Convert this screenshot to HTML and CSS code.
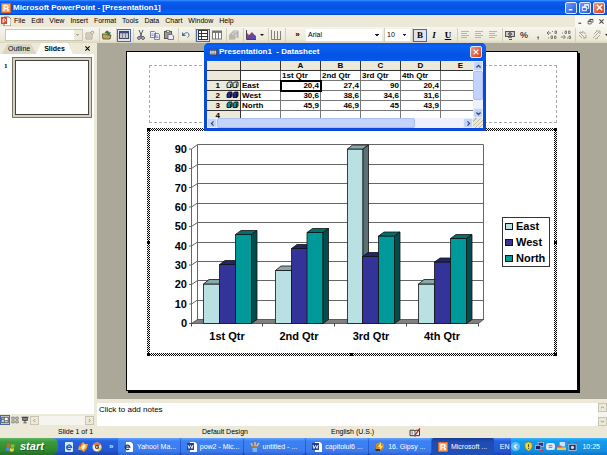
FILE: index.html
```html
<!DOCTYPE html>
<html lang="en">
<head>
<meta charset="utf-8">
<title>Microsoft PowerPoint - [Presentation1]</title>
<link rel="stylesheet" href="styles.css">
</head>
<body>
<svg class="defs" aria-hidden="true">
  <symbol id="ppt" viewBox="0 0 10 10"><rect width="10" height="10" rx="1" fill="#e2662a"/><rect x="1" y="1" width="8" height="8" fill="#f6a45c"/><path d="M3 8V2.500h2.500a1.500 1.500 0 0 1 0 3H3M6 7h2" fill="none" stroke="#fff" stroke-width="1.300"/></symbol>
  <symbol id="doc" viewBox="0 0 10 10"><path d="M3 1h5l2 2v7H3z" fill="#fff" stroke="#555" stroke-width=".7"/><rect y="1" width="6" height="7" fill="#d8442c"/><path d="M2 7V3h1.500a1 1 0 0 1 0 2.300H2" fill="none" stroke="#fff" stroke-width=".9"/></symbol>
  <symbol id="props" viewBox="0 0 10 10"><path d="M1 3h6v6H1zM2 5h4M2 7h4M5 3l2-2 2 1-2 3" fill="none" stroke="#aca899" stroke-width="1"/></symbol>
  <symbol id="import" viewBox="0 0 10 10"><path d="M0 4h4l1 1h4l-1 4H1z" fill="#b8a850" stroke="#4a4a28" stroke-width=".8"/><path d="M3 3c1-3 4-2 4 0l1.500-.5L7 5 4.500 3.500 6 3" fill="#3b7a3b" stroke="#234" stroke-width=".4"/></symbol>
  <symbol id="sheet" viewBox="0 0 10 10"><rect x=".5" y="1.500" width="9" height="7" fill="#fff" stroke="#444"/><path d="M0 2.500h10" stroke="#334a80" stroke-width="2"/><path d="M.5 5h9M.5 7h9M3.500 2v7M6.500 2v7" stroke="#667" stroke-width=".7"/></symbol>
  <symbol id="cut" viewBox="0 0 10 10"><path d="M3 0l3 7M7 0L4 7" stroke="#556" fill="none"/><circle cx="3" cy="8" r="1.400" fill="none" stroke="#446"/><circle cx="7" cy="8" r="1.400" fill="none" stroke="#446"/></symbol>
  <symbol id="copy" viewBox="0 0 10 10"><path d="M.5 1.500h4l1 1v5h-5zM4.500 3.500h4l1 1v5h-5z" fill="#eef" stroke="#66698c" stroke-width=".8"/><path d="M1.500 4h2M1.500 5.500h2M5.500 6h3M5.500 7.500h3" stroke="#66698c" stroke-width=".6"/></symbol>
  <symbol id="paste" viewBox="0 0 10 10"><rect x=".5" y="1.500" width="7" height="7" fill="#a29a80" stroke="#555"/><rect x="2.500" y=".5" width="3" height="2" fill="#ddd" stroke="#555" stroke-width=".6"/><path d="M4 4.500h4l1.500 1.500v3.500H4z" fill="#eef" stroke="#558" stroke-width=".8"/></symbol>
  <symbol id="undo" viewBox="0 0 10 10"><path d="M2 5c2-3 6-3 6 0 0 1-.5 2-1.500 2.500" fill="none" stroke="#556aa0"/><path d="M1 2v4h4z" fill="#556aa0"/></symbol>
  <symbol id="rows" viewBox="0 0 10 10"><rect x=".5" y=".5" width="9" height="9" fill="#fff" stroke="#333"/><path d="M.5 3.500h9M.5 6.500h9M3.500 .5v9" stroke="#333"/></symbol>
  <symbol id="cols" viewBox="0 0 10 10"><rect x=".5" y="1" width="9" height="8" fill="#fff" stroke="#777"/><path d="M1 2h8" stroke="#555" stroke-width="1.500"/><path d="M3.500 1v8M6.500 1v8" stroke="#777"/></symbol>
  <symbol id="table3" viewBox="0 0 10 10"><path d="M0 5h6v4H0zM2 5V3h7v5M4 3V1h5v2M2 5v4M4 5v4M6 5V3M8 8V2M0 7h6" fill="none" stroke="#999" stroke-width=".8"/></symbol>
  <symbol id="area" viewBox="0 0 10 10"><path d="M0 9V2l3 3 3-3 3 4v3z" fill="#a34450"/><path d="M0 9V6l3 1 3-4 4 3v3z" fill="#5c48b4"/><path d="M.5 0v9.500H10" fill="none" stroke="#445"/></symbol>
  <symbol id="vgrid" viewBox="0 0 10 10"><path d="M.5 0v9.500h9.500M3.500 1v8M6.500 1v8M9.500 1v8" fill="none" stroke="#666" stroke-width=".8"/></symbol>
  <symbol id="lines" viewBox="0 0 10 10"><path d="M1 1.500h8M1 3.500h6M1 5.500h8M1 7.500h6" stroke="#b9b6a8"/></symbol>
  <symbol id="money" viewBox="0 0 10 10"><rect x=".5" y="1.500" width="9" height="5" fill="#ccc" stroke="#555"/><circle cx="5" cy="4" r="1.300" fill="none" stroke="#333"/><path d="M3 8c1-1 3-1 4 0M4 9.500h3" stroke="#555" fill="none"/></symbol>
  <symbol id="decup" viewBox="0 0 10 10"><path d="M0 3h4M2 1L0 3l2 2M5 1.500h1M8 1h1.500v2.500H8zM1 8h1M4 6h1.500v2.500H4zM7.500 6H9v2.500H7.500z" fill="none" stroke="#666" stroke-width=".8"/></symbol>
  <symbol id="decdn" viewBox="0 0 10 10"><path d="M1 3h1M4 1h1.500v2.500H4zM7.500 1H9v2.500H7.500zM0 7h4M2.500 5l2 2-2 2M6 8h1M8 6h1.500v2.500H8z" fill="none" stroke="#666" stroke-width=".8"/></symbol>
  <symbol id="angle" viewBox="0 0 10 10"><path d="M1 2l6 6M8 5v3H5M1 5l3 3M4 1l4 3M2 2l3 1" fill="none" stroke="#aca899"/></symbol>
  <symbol id="angleup" viewBox="0 0 10 10"><path d="M1 8l6-6M4 1h4v3M2 4l3-3M5 8l3-3M3 9l3-1" fill="none" stroke="#aca899"/></symbol>
  <symbol id="min" viewBox="0 0 10 10"><path d="M2 7.500h4" stroke="currentColor" stroke-width="1.600"/></symbol>
  <symbol id="restore" viewBox="0 0 10 10"><path d="M4 4V2h4.500v4H7M1.500 4.500H6v4H1.500z" fill="none" stroke="currentColor" stroke-width="1"/><path d="M1.500 4.500H6M4 2h4.500" stroke="currentColor" stroke-width="1.500"/></symbol>
  <symbol id="close" viewBox="0 0 10 10"><path d="M2 2l6 6M8 2L2 8" stroke="currentColor" stroke-width="1.500"/></symbol>
  <symbol id="left" viewBox="0 0 10 10"><path d="M6.500 2l-3 3 3 3" fill="none" stroke="currentColor" stroke-width="1.800"/></symbol>
  <symbol id="right" viewBox="0 0 10 10"><path d="M3.500 2l3 3-3 3" fill="none" stroke="currentColor" stroke-width="1.800"/></symbol>
  <symbol id="up" viewBox="0 0 10 10"><path d="M2 6.500l3-3 3 3" fill="none" stroke="currentColor" stroke-width="1.800"/></symbol>
  <symbol id="down" viewBox="0 0 10 10"><path d="M2 3.500l3 3 3-3" fill="none" stroke="currentColor" stroke-width="1.800"/></symbol>
  <symbol id="bars" viewBox="0 0 13 7"><path d="M1 3l1.500-2H6v4L5 6.500H1zM7 2.500L8.500 1H12v4l-1 1.500H7z" fill="currentColor" stroke="#000" stroke-width=".8"/><path d="M4.500 3v3.500M10.500 2.500v4" fill="none" stroke="#000" stroke-width=".7"/></symbol>
  <symbol id="normal" viewBox="0 0 10 10"><rect x="1" y="1.500" width="8" height="7" fill="#fff" stroke="#333"/><path d="M4 1.500v7M4 6h5M1 4h3" stroke="#333"/></symbol>
  <symbol id="sorter" viewBox="0 0 10 10"><path d="M1 1.500h3v2.500H1zM6 1.500h3v2.500H6zM1 6h3v2.500H1zM6 6h3v2.500H6z" fill="#fff" stroke="#444" stroke-width=".8"/></symbol>
  <symbol id="show" viewBox="0 0 10 10"><path d="M.5 1.500h9M2 2h6v3.500H2zM5 5v3M3 8.500h4" fill="#889" stroke="#333"/></symbol>
  <symbol id="flag" viewBox="0 0 10 10"><path d="M1 2q2-1.500 3.500-.3L4 5Q2.500 4 .5 5z" fill="#f0562a"/><path d="M5 2q2 1 4 0L8.300 5.200q-2 1-3.800 0z" fill="#7cc142"/><path d="M.5 5.600q2-1.200 3.300-.2L3.200 9Q1.500 8 0 9z" fill="#4a8df0"/><path d="M4.300 5.900q2 1 3.900 0L7.500 9.300q-2 .8-3.900-.2z" fill="#fbd034"/></symbol>
  <symbol id="ie" viewBox="0 0 10 10"><rect x="1" width="8" height="10" rx="1" fill="#dcecff"/><path d="M3 5.300h4.500a2.400 2.400 0 1 0-.7 1.800" fill="none" stroke="#1d62c8" stroke-width="1.400"/></symbol>
  <symbol id="media" viewBox="0 0 10 10"><path d="M5 0l2 2 3 0-1 4-3 4-3-2-3 0 1-4z" fill="#f0a030"/><path d="M3 5l3-3 2 2-3 4z" fill="#fff4c8"/><path d="M1 3l2-2 1 1-2 3z" fill="#d0481c"/></symbol>
  <symbol id="player" viewBox="0 0 10 10"><circle cx="5" cy="5" r="4.500" fill="#f0ece0"/><path d="M1 3A4.500 4.500 0 0 1 9 3L6 4z" fill="#e9732a"/><path d="M6 6l3.500-1A4.500 4.500 0 0 1 6 9.500z" fill="#f5c838"/><circle cx="5" cy="5" r="2" fill="#334"/><path d="M4.300 3.800l2 1.200-2 1.200z" fill="#fff"/></symbol>
  <symbol id="page" viewBox="0 0 10 10"><path d="M2 0h5l2 2v8H2z" fill="#fff"/><path d="M1 5.200h4.800a2.300 2.300 0 1 0-.7 1.800" fill="none" stroke="#17386e" stroke-width="1.300"/></symbol>
  <symbol id="word" viewBox="0 0 10 10"><path d="M3 0h5l2 2v8H3z" fill="#fff"/><rect y="1" width="7" height="7" fill="#28408f"/><path d="M1 3l1 3.500L3.500 3.500 5 6.500 6 3" fill="none" stroke="#fff" stroke-width=".9"/></symbol>
  <symbol id="paint" viewBox="0 0 10 10"><path d="M2 5h5v5H3z" fill="#7fb4e8"/><path d="M3 5L1 1M5 5V0M6 5l3-4" stroke="#e8c060" stroke-width="1.500"/><path d="M2 5h5" stroke="#943"/></symbol>
  <symbol id="amp" viewBox="0 0 10 10"><path d="M1 2l4-2 4 2v4L5 9 1 7z" fill="#d08a28"/><path d="M6 0L3 5h2L3 10l5-6H6z" fill="#ffe070"/><path d="M0 7h5v2H1z" fill="#333"/></symbol>
  <symbol id="shield" viewBox="0 0 10 10"><path d="M5 0l4 1.500v3.500q0 3-4 5-4-2-4-5V1.500z" fill="#f7d62c" stroke="#8a6b00" stroke-width=".6"/><path d="M5 2.500v3M5 6.500v1.200" stroke="#333"/></symbol>
  <symbol id="net" viewBox="0 0 10 10"><rect x="3.500" y=".5" width="6" height="4.500" fill="#223a8c" stroke="#aac"/><rect x=".5" y="4" width="6" height="4.500" fill="#10246a" stroke="#aac"/><path d="M5 9.500h4" stroke="#d33"/></symbol>
  <symbol id="disc" viewBox="0 0 10 10"><rect y="1" width="10" height="8" rx="3" fill="#e4e8f4"/><path d="M3 4h4M3 6h4" stroke="#8a5ac0"/></symbol>
  <symbol id="stack" viewBox="0 0 10 10"><rect x="3" y="0" width="6" height="5" fill="#cfe0f8"/><path d="M0 6h10v3H0z" fill="#f2c84c"/><path d="M1 4h4v2H1z" fill="#e05a3a"/></symbol>
  <symbol id="cam" viewBox="0 0 10 10"><path d="M0 1l3 1M10 1L7 2" stroke="#d33" stroke-width="1.500"/><rect x="1" y="2.500" width="8" height="7" fill="#22305c" stroke="#dde" stroke-width=".8"/><circle cx="5" cy="6" r="1.800" fill="#cde"/></symbol>
  <symbol id="spell" viewBox="0 0 12 10"><path d="M.5 2.500h4.500l1 1 1-1h4v6H7l-1 .8-1-.8H.5z" fill="#fff" stroke="#222"/><path d="M6 3v6M2 4.500h2M2 6.500h2" stroke="#222" stroke-width=".8"/><path d="M6 8l5.500-7.500" stroke="#a22" stroke-width="1.500"/></symbol>
</svg>

<header class="titlebar">
  <svg class="ico"><use href="#ppt"/></svg>
  <h1>Microsoft PowerPoint - [Presentation1]</h1>
  <div class="winbtns">
    <button class="win" aria-label="Minimize"><svg class="ico"><use href="#min"/></svg></button>
    <button class="win" aria-label="Restore"><svg class="ico"><use href="#restore"/></svg></button>
    <button class="win red" aria-label="Close"><svg class="ico"><use href="#close"/></svg></button>
  </div>
</header>

<nav class="menubar">
  <svg class="ico"><use href="#doc"/></svg>
  <button>File</button><button>Edit</button><button>View</button><button>Insert</button><button>Format</button><button>Tools</button><button>Data</button><button>Chart</button><button>Window</button><button>Help</button>
  <div class="mdi">
    <button aria-label="Minimize document"><svg class="ico sm"><use href="#min"/></svg></button>
    <button aria-label="Restore document"><svg class="ico sm"><use href="#restore"/></svg></button>
    <button aria-label="Close document"><svg class="ico sm"><use href="#close"/></svg></button>
  </div>
</nav>

<div class="toolbar">
  <div class="group"><select class="objects" aria-label="Chart objects" disabled><option></option></select><button aria-label="Format"><svg class="ico"><use href="#props"/></svg></button></div>
  <div class="group"><button aria-label="Import file"><svg class="ico"><use href="#import"/></svg></button></div>
  <div class="group"><button class="on" aria-label="View datasheet"><svg class="ico"><use href="#sheet"/></svg></button></div>
  <div class="group"><button aria-label="Cut"><svg class="ico"><use href="#cut"/></svg></button><button aria-label="Copy"><svg class="ico"><use href="#copy"/></svg></button><button aria-label="Paste"><svg class="ico"><use href="#paste"/></svg></button></div>
  <div class="group"><button aria-label="Undo"><svg class="ico"><use href="#undo"/></svg></button></div>
  <div class="group"><button class="on" aria-label="By row"><svg class="ico"><use href="#rows"/></svg></button><button aria-label="By column"><svg class="ico"><use href="#cols"/></svg></button></div>
  <div class="group"><button aria-label="Data table"><svg class="ico"><use href="#table3"/></svg></button></div>
  <div class="group"><button aria-label="Chart type"><svg class="ico"><use href="#area"/></svg></button><button class="drop" aria-label="Chart type list"></button></div>
  <div class="group"><button aria-label="Category gridlines"><svg class="ico"><use href="#vgrid"/></svg></button></div>
  <button class="more" aria-label="More buttons">»</button>
  <div class="group"><select class="font" aria-label="Font"><option>Arial</option></select></div>
  <div class="group"><select class="size" aria-label="Font size"><option>10</option></select></div>
  <div class="group"><button class="on serif" aria-label="Bold">B</button><button class="serif it" aria-label="Italic">I</button><button class="serif un" aria-label="Underline">U</button></div>
  <div class="group"><button aria-label="Align left"><svg class="ico"><use href="#lines"/></svg></button><button aria-label="Center"><svg class="ico"><use href="#lines"/></svg></button><button aria-label="Align right"><svg class="ico"><use href="#lines"/></svg></button></div>
  <div class="group"><button aria-label="Currency style"><svg class="ico"><use href="#money"/></svg></button><button class="sym">%</button><button class="sym">,</button><button aria-label="Increase decimal"><svg class="ico"><use href="#decup"/></svg></button><button aria-label="Decrease decimal"><svg class="ico"><use href="#decdn"/></svg></button></div>
  <div class="group last"><button aria-label="Angle clockwise"><svg class="ico"><use href="#angle"/></svg></button><button aria-label="Angle counterclockwise"><svg class="ico"><use href="#angleup"/></svg></button></div>
  <button class="drop" aria-label="Toolbar options"></button>
</div>

<main class="work">
  <aside class="pane">
    <div class="tabs"><button class="tab">Outline</button><button class="tab current">Slides</button><button class="x" aria-label="Close pane"><svg class="ico sm"><use href="#close"/></svg></button></div>
    <div class="thumbs"><span>1</span><div class="thumb"></div></div>
    <div class="views">
      <button class="on" aria-label="Normal view"><svg class="ico"><use href="#normal"/></svg></button><button aria-label="Slide sorter"><svg class="ico"><use href="#sorter"/></svg></button><button aria-label="Slide show"><svg class="ico"><use href="#show"/></svg></button>
      <div class="hbar"><button class="arrow" aria-label="Scroll left"><svg class="ico sm"><use href="#left"/></svg></button><button class="arrow" aria-label="Scroll right"><svg class="ico sm"><use href="#right"/></svg></button></div>
    </div>
  </aside>

  <section class="editor">
    <div class="stage">
      <div class="slide">
        <div class="placeholder"></div>
        <svg class="chart" viewBox="147 128 410 228" role="img" aria-label="Quarterly chart">
          <defs>
            <pattern id="hatch" width="2" height="2" patternUnits="userSpaceOnUse"><rect width="2" height="2" fill="#fff"/><path d="M0 0h1v1H0zM1 1h1v1H1z" fill="#000"/></pattern>
          </defs>
          <path d="M147 128h410v228H147zM150 131v222h404V131z" fill="url(#hatch)" fill-rule="evenodd" shape-rendering="crispEdges"/>
          <path d="M147 128h3v3h-3zM554 128h3v3h-3zM147 353h3v3h-3zM554 353h3v3h-3zM147 241h3v3h-3zM554 241h3v3h-3zM350 353h3v3h-3z"/>
          <g fill="none" stroke="#666">
            <path d="M191.500 324V149l6-4.500h286V320M197.500 144.500V320M197.500 164.500h286M197.500 183.500h286M197.500 203.500h286M197.500 222.500h286M197.500 242.500h286M197.500 261.500h286M197.500 280.500h286M197.500 300.500h286"/>
            <path d="M189 149h2.500M189 168.500h2.500l6-4M189 187.500h2.500l6-4M189 207h2.500l6-4M189 226.500h2.500l6-4M189 246h2.500l6-4M189 265h2.500l6-4M189 284.500h2.500l6-4M189 304h2.500l6-4M189 323.500h2.500"/>
          </g>
          <path d="M191.500 323.500l6-4h286l-5 4z" fill="#808080" stroke="#444" stroke-width=".8"/>
          <path d="M191.500 323.500v3M262.500 323.500v3M334.500 323.500v3M406.500 323.500v3M478.500 323.500v3" stroke="#444"/>
          <g stroke="#111" stroke-width=".8" stroke-linejoin="round">
            <g fill="#b9e0e3">
              <path d="M203.500 284h16v39.500h-16zM275.500 270.500h16v53h-16zM347.500 149h15.500v174.500h-15.500zM418.500 284h16v39.500h-16z"/>
            </g>
            <g fill="#87a9ab"><path d="M203.500 284l5.500-4.500h16l-5.500 4.500zM275.500 270.500l5.500-4.500h16l-5.500 4.500zM347.500 149l5-4h16l-5.500 4zM418.500 284l5.500-4.500h16l-5.500 4.500z"/></g>
            <path d="M363 149l5.500-4v175l-5.500 3.500z" fill="#5c7173"/>
            <g fill="#333399">
              <path d="M219.500 264.500h16v59h-16zM291.500 248.500h16v75h-16zM362.500 256.500h16v67h-16zM434.500 262h16v61.500h-16z"/>
            </g>
            <g fill="#242466"><path d="M219.500 264.500l5.500-4h16l-5.500 4zM291.500 248.500l5.500-4h16l-5.500 4zM362.500 256.500l5.500-4h16l-5.500 4zM434.500 262l5.500-4h16l-5.500 4z"/></g>
            <g fill="#009999">
              <path d="M235.500 234.500h16v89h-16zM307 232.500h16v91h-16zM378.500 236h16v87.500h-16zM450.500 238.500h16v85h-16z"/>
            </g>
            <g fill="#00706e"><path d="M235.500 234.500l5.500-4h16l-5.500 4zM307 232.500l5.500-4h16l-5.500 4zM378.500 236l5.500-4h16l-5.500 4zM450.500 238.500l5.500-4h16l-5.500 4z"/></g>
            <g fill="#004d4d"><path d="M251.500 234.500l5.500-4v89l-5.500 4zM323 232.500l5.500-4v91l-5.500 4zM394.500 236l5.500-4v87.500l-5.500 4zM466.500 238.500l5.500-4v85l-5.500 4z"/></g>
          </g>
          <g class="lbl" text-anchor="end">
            <text x="187" y="153">90</text><text x="187" y="172">80</text><text x="187" y="192">70</text><text x="187" y="211">60</text><text x="187" y="230">50</text><text x="187" y="250">40</text><text x="187" y="269">30</text><text x="187" y="288">20</text><text x="187" y="308">10</text><text x="187" y="327">0</text>
          </g>
          <g class="lbl" text-anchor="middle">
            <text x="227" y="340">1st Qtr</text><text x="299" y="340">2nd Qtr</text><text x="371" y="340">3rd Qtr</text><text x="442" y="340">4th Qtr</text>
          </g>
          <rect x="502.500" y="217.500" width="47" height="49" fill="#fff" stroke="#333"/>
          <g stroke="#111"><rect x="505.500" y="223.500" width="7" height="6" fill="#b9e0e3"/><rect x="505.500" y="239.500" width="7" height="6" fill="#333399"/><rect x="505.500" y="255.500" width="7" height="6" fill="#009999"/></g>
          <g class="lbl"><text x="516" y="230">East</text><text x="516" y="246">West</text><text x="516" y="262">North</text></g>
        </svg>
      </div>
    </div>
    <div class="notes">
      <textarea aria-label="Notes">Click to add notes</textarea>
      <div class="vbar"><button class="arrow" aria-label="Scroll up"><svg class="ico sm"><use href="#up"/></svg></button><button class="arrow" aria-label="Scroll down"><svg class="ico sm"><use href="#down"/></svg></button></div>
    </div>
  </section>
</main>

<section class="datasheet" aria-label="Datasheet">
  <header><svg class="ico"><use href="#sheet"/></svg><h2>Presentation1 &nbsp;- Datasheet</h2><button class="win red" aria-label="Close datasheet"><svg class="ico"><use href="#close"/></svg></button></header>
  <div class="sheet">
    <div class="grid">
      <table>
        <colgroup><col class="c0"><col class="c1"><col class="c2"><col class="c2"><col class="c2"><col class="c2"><col class="c2"></colgroup>
        <thead><tr><th></th><th></th><th>A</th><th>B</th><th>C</th><th>D</th><th>E</th></tr></thead>
        <tbody>
          <tr><th></th><td></td><td class="t">1st Qtr</td><td class="t">2nd Qtr</td><td class="t">3rd Qtr</td><td class="t">4th Qtr</td><td></td></tr>
          <tr><th class="r">1<svg class="east"><use href="#bars"/></svg></th><td class="t">East</td><td class="sel">20,4</td><td>27,4</td><td>90</td><td>20,4</td><td></td></tr>
          <tr><th class="r">2<svg class="west"><use href="#bars"/></svg></th><td class="t">West</td><td>30,6</td><td>38,6</td><td>34,6</td><td>31,6</td><td></td></tr>
          <tr><th class="r">3<svg class="north"><use href="#bars"/></svg></th><td class="t">North</td><td>45,9</td><td>46,9</td><td>45</td><td>43,9</td><td></td></tr>
          <tr><th class="r">4<svg></svg></th><td></td><td></td><td></td><td></td><td></td><td></td></tr>
        </tbody>
      </table>
    </div>
    <div class="xpv"><button class="xp" aria-label="Scroll up"><svg class="ico sm"><use href="#up"/></svg></button><div class="grip"></div><button class="xp" aria-label="Scroll down"><svg class="ico sm"><use href="#down"/></svg></button></div>
  </div>
  <div class="xph"><button class="xp" aria-label="Scroll left"><svg class="ico sm"><use href="#left"/></svg></button><div class="grip"></div><button class="xp" aria-label="Scroll right"><svg class="ico sm"><use href="#right"/></svg></button><div class="corner"></div></div>
</section>

<footer class="status"><span>Slide 1 of 1</span><span>Default Design</span><span>English (U.S.)</span><svg class="book"><use href="#spell"/></svg></footer>

<div class="taskbar">
  <button class="start"><svg class="ico"><use href="#flag"/></svg>start</button>
  <div class="quick"><button aria-label="Internet Explorer"><svg class="ico"><use href="#ie"/></svg></button><button aria-label="Media"><svg class="ico"><use href="#media"/></svg></button><button aria-label="Player"><svg class="ico"><use href="#player"/></svg></button><button class="chev" aria-label="More">»</button></div>
  <div class="tasks">
    <button><svg class="ico"><use href="#page"/></svg>Yahoo! Ma...</button>
    <button><svg class="ico"><use href="#word"/></svg>pow2 - Mic...</button>
    <button><svg class="ico"><use href="#paint"/></svg>untitled - ...</button>
    <button><svg class="ico"><use href="#word"/></svg>capitolul6 ...</button>
    <button><svg class="ico"><use href="#amp"/></svg>16. Gipsy ...</button>
    <button class="active"><svg class="ico"><use href="#ppt"/></svg>Microsoft ...</button>
  </div>
  <span class="lang">EN</span>
  <div class="tray"><button class="expand" aria-label="Show hidden icons"><svg class="ico sm"><use href="#left"/></svg></button><svg class="ico"><use href="#shield"/></svg><svg class="ico"><use href="#net"/></svg><svg class="ico"><use href="#disc"/></svg><svg class="ico"><use href="#stack"/></svg><svg class="ico"><use href="#cam"/></svg><span>10:25</span></div>
</div>
</body>
</html>
```
FILE: styles.css
```css
* { box-sizing: border-box; }
body {
  margin: 0;
  height: 100vh;
  display: flex;
  flex-direction: column;
  position: relative;
  overflow: hidden;
  background: #ece9d8;
  font: 7px/10px "Liberation Sans", Arial, sans-serif;
  color: #000;
}
button, select, textarea { font: inherit; color: inherit; margin: 0; padding: 0; border: 0; background: none; border-radius: 0; }
h1, h2 { margin: 0; font-size: 8px; line-height: 12px; font-weight: bold; color: #fff; white-space: nowrap; }
svg { display: block; flex: none; }
.defs { position: absolute; width: 0; height: 0; }
.ico { width: 10px; height: 10px; }
.sm { width: 7px; height: 7px; }

.titlebar {
  flex: none;
  height: 15px;
  display: flex;
  align-items: center;
  gap: 2px;
  padding: 0 2px 0 1px;
  background: linear-gradient(#3a8cff 0, #0a5cf0 2px, #0552e2 8px, #0464fa 13px, #0340bc 15px);
}
.winbtns { margin-left: auto; display: flex; gap: 2px; }
.win {
  width: 12px;
  height: 12px;
  display: grid;
  place-items: center;
  border: 1px solid #dfe9ff;
  border-radius: 2px;
  background: linear-gradient(135deg, #6f9cf8, #2258d8);
  color: #fff;
}
.win .ico { width: 9px; height: 9px; }
.red { background: linear-gradient(135deg, #f09a7c, #d63c14); }

.menubar { flex: none; height: 12px; display: flex; align-items: center; padding-left: 1px; }
.menubar > button { padding: 0 3px; }
.mdi { margin-left: auto; height: 12px; width: 32px; display: flex; align-items: center; justify-content: space-around; background: #f8f7f1; color: #444; }

.toolbar {
  flex: none;
  height: 16px;
  display: flex;
  align-items: center;
  padding-left: 5px;
  background: linear-gradient(#f7f6ee, #ece9d8 80%, #d8d4c0);
}
.group { display: flex; align-items: center; padding-right: 2px; border-right: 1px solid #d3cfbc; height: 14px; }
.last { border-right: 0; padding-right: 0; }
.toolbar button { width: 14px; height: 13px; display: grid; place-items: center; flex: none; }
.toolbar .on, .views .on { border: 1px solid #4a68a8; background: #dfe4f0; }
.toolbar select {
  appearance: none;
  height: 12px;
  padding: 0 2px;
  font-size: 7px;
  background: linear-gradient(45deg, transparent 50%, #222 50%) right 5px center / 2px 2px no-repeat, linear-gradient(-45deg, transparent 50%, #222 50%) right 3px center / 2px 2px no-repeat, #fff;
}
.toolbar .objects { width: 78px; border: 1px solid #cbc7b4; background: linear-gradient(45deg, transparent 50%, #aca899 50%) right 4px center / 2px 2px no-repeat, linear-gradient(-45deg, transparent 50%, #aca899 50%) right 2px center / 2px 2px no-repeat, linear-gradient(90deg, #fff 68px, #ece9d8 68px); opacity: 1; }
.toolbar .font { width: 76px; }
.toolbar .size { width: 25px; }
.toolbar .drop { width: 8px; }
.drop::after { content: ""; border: 2px solid transparent; border-top-color: #111; border-bottom: 0; }
.toolbar .more { width: 15px; margin: 0 1px 0 4px; font-size: 8px; font-weight: bold; }
.toolbar .serif { font: bold 9px/9px "Liberation Serif", serif; }
.toolbar .it { font-style: italic; }
.un { text-decoration: underline; }
.toolbar .sym { font-size: 9px; font-weight: bold; color: #444; }
.toolbar > .drop { width: 6px; }

.work { flex: 1; min-height: 0; display: flex; }
.pane { width: 97px; flex: none; display: flex; flex-direction: column; padding-right: 3px; }
.tabs { display: flex; height: 11px; align-items: flex-end; padding-left: 2px; }
.tab { height: 10px; padding: 0 6px; background: #dad6c3; clip-path: polygon(5px 0, calc(100% - 5px) 0, 100% 100%, 0 100%); }
.tab.current { height: 11px; padding: 0 8px; background: #fff; font-weight: bold; }
.x { margin: 0 3px 2px auto; }
.thumbs { flex: 1; display: flex; gap: 4px; padding: 3px 2px 0 4px; background: #fff; font: bold 7px/18px "Liberation Serif", serif; }
.thumb { flex: 1; height: 61px; border: 1px solid #77746a; background: #fff; outline: 1px solid #44423a; outline-offset: -4px; box-shadow: inset 0 0 0 2px #d5d2c3; }
.views { display: flex; align-items: center; height: 12px; }
.views > button { width: 10px; height: 10px; display: grid; place-items: center; }
.views .ico { width: 8px; height: 8px; }
.hbar { flex: 1; display: flex; justify-content: space-between; background: #f5f4ee; }
.arrow { width: 9px; height: 9px; display: grid; place-items: center; border: 1px solid #c8c5b4; background: #ece9d8; color: #8f8c7c; }
.arrow .sm { width: 5px; height: 5px; }

.editor { flex: 1; min-width: 0; display: flex; flex-direction: column; }
.stage { flex: 1; min-height: 0; padding: 8px 29px 8px; background: #aca899; }
.slide { height: 100%; padding: 13px 20px 0 20px; background: #fff; border: 1px solid #000; box-shadow: 2px 2px 0 #000; }
.placeholder { height: 58px; margin: 0 0 5px 2px; border: 1px dashed #aaa; }
.chart { width: 100%; height: auto; }
.lbl { font: bold 11px "Liberation Sans", Arial, sans-serif; }
.notes { flex: none; height: 27px; display: flex; padding-top: 4px; }
.notes textarea { flex: 1; resize: none; padding: 1px 2px; background: #fff; font-size: 8px; line-height: 11px; overflow: hidden; }
.vbar { width: 9px; display: flex; flex-direction: column; justify-content: space-between; background: #f5f4ee; }

.datasheet {
  position: absolute;
  left: 204px;
  top: 43px;
  width: 282px;
  padding: 0 3px 3px;
  background: #0a48d8;
  border-radius: 5px 5px 0 0;
}
.datasheet header { height: 18px; display: flex; align-items: center; gap: 2px; margin: 0 -3px; padding: 0 4px 0 5px; border-radius: 5px 5px 0 0; background: linear-gradient(#0a50e0, #0a62f4 3px, #0553e2 12px, #0458ec); }
.datasheet .ico { width: 8px; height: 8px; }
.datasheet .sm { width: 7px; height: 7px; }
.datasheet header button { margin-left: auto; }
.sheet { display: flex; height: 57px; background: #fff; }
.grid { flex: 1; min-width: 0; overflow: hidden; }
table { border-collapse: separate; border-spacing: 0; table-layout: fixed; width: 274px; font-size: 8px; line-height: 9px; font-weight: bold; }
.c0 { width: 34px; }
.c1, .c2 { width: 40px; }
th, td { height: 10px; padding: 0 1px; border-right: 1px solid #777; border-bottom: 1px solid #777; text-align: right; white-space: nowrap; }
th { background: #ece9d8; text-align: center; border-color: #333; }
.t { text-align: left; }
.r { text-align: right; }
.r svg { display: inline-block; width: 13px; height: 7px; margin-left: 6px; }
.sel { outline: 2px solid #000; outline-offset: -1px; }
.east { color: #c8dedc; }
.west { color: #26269a; }
.north { color: #0a9090; }
.xpv { width: 10px; display: flex; flex-direction: column; background: #eef1fc; }
.xph { height: 10px; display: flex; background: #eef1fc; }
.xp { width: 10px; height: 10px; flex: none; display: grid; place-items: center; border: 1px solid #e4ecff; border-radius: 2px; background: #c3d3fb; color: #33507c; }
.grip { background: #c3d3fb; border: 1px solid #aabff2; border-radius: 2px; }
.xpv .grip { height: 29px; margin-bottom: auto; }
.xph .grip { width: 198px; margin-right: auto; }
.corner { width: 10px; background: repeating-linear-gradient(135deg, #ece9d8 0 2px, #c0bba6 2px 3px); }

.status { flex: none; height: 12px; display: grid; grid-template-columns: 144px 129px 78px 1fr; align-items: center; padding-left: 58px; }
.book { width: 12px; height: 9px; }

.taskbar { flex: none; height: 17px; display: flex; align-items: stretch; color: #fff; background: linear-gradient(#4a8cf4, #2560de 3px, #2358d2 13px, #1b44a8); }
.start { width: 58px; display: flex; align-items: center; gap: 4px; padding-left: 6px; border-radius: 0 6px 6px 0; background: linear-gradient(#5fb45f, #3a9a3a 4px, #2f8a30 12px, #256f26); font: italic bold 11px/15px "Liberation Sans", Arial, sans-serif; text-shadow: 1px 1px 0 #1d5a1e; }
.quick { display: flex; align-items: center; gap: 4px; width: 60px; padding-left: 6px; }
.chev { margin-left: 3px; font-size: 8px; }
.tasks { flex: 1; min-width: 0; display: grid; grid-template-columns: repeat(6, 1fr); gap: 1px; }
.tasks button { display: flex; align-items: center; gap: 3px; padding-left: 6px; min-width: 0; overflow: hidden; white-space: nowrap; border-radius: 2px; background: linear-gradient(#6aa4fb, #3c81f3 3px, #3a7cee 13px, #2a62d2); }
.tasks .active { background: linear-gradient(#173c94, #1e4cb4 4px, #1f50b8); }
.lang { display: flex; align-items: center; padding: 0 2px 0 6px; }
.tray { display: flex; align-items: center; gap: 2px; padding-right: 7px; background: linear-gradient(#3cb4f8, #139bec 3px, #118fe4 13px, #0d74c4); }
.tray .ico { width: 9px; height: 9px; }
.tray span { margin-left: 3px; }
.tray .expand { width: 9px; height: 9px; display: grid; place-items: center; border-radius: 50%; background: #5cc0fc; margin-right: 2px; }
.tray .expand .ico { width: 7px; height: 7px; }
```
